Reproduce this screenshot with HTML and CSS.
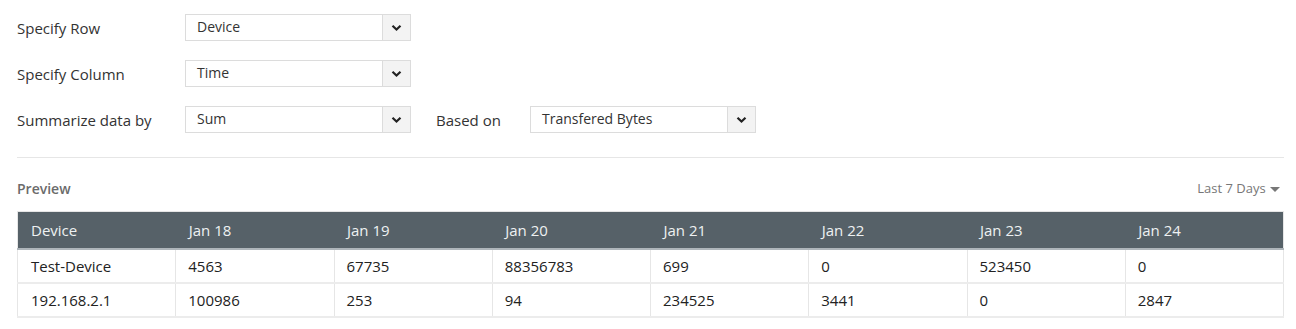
FILE: index.html
```html
<!DOCTYPE html>
<html lang="en">
  <head>
    <meta charset="utf-8">
    <title>Report Builder</title>
    <link rel="stylesheet" href="styles.css">
  </head>
  <body>
    <div class="page">

      <!-- report options -->
      <div class="options">
        <div class="optRow">
          <span class="optLabel">Specify Row</span>
          <div class="dropBox">
            <span class="dropText">Device</span>
            <span class="dropArrow"><svg width="11" height="8" viewBox="0 0 11 8"><path d="M1.5 1.8 L5.5 5.6 L9.5 1.8" fill="none" stroke="#222" stroke-width="2.2"/></svg></span>
          </div>
        </div>
        <div class="optRow">
          <span class="optLabel">Specify Column</span>
          <div class="dropBox">
            <span class="dropText">Time</span>
            <span class="dropArrow"><svg width="11" height="8" viewBox="0 0 11 8"><path d="M1.5 1.8 L5.5 5.6 L9.5 1.8" fill="none" stroke="#222" stroke-width="2.2"/></svg></span>
          </div>
        </div>
        <div class="optRow">
          <span class="optLabel">Summarize data by</span>
          <div class="dropBox">
            <span class="dropText">Sum</span>
            <span class="dropArrow"><svg width="11" height="8" viewBox="0 0 11 8"><path d="M1.5 1.8 L5.5 5.6 L9.5 1.8" fill="none" stroke="#222" stroke-width="2.2"/></svg></span>
          </div>
          <span class="optLabel small">Based on</span>
          <div class="dropBox">
            <span class="dropText">Transfered Bytes</span>
            <span class="dropArrow"><svg width="11" height="8" viewBox="0 0 11 8"><path d="M1.5 1.8 L5.5 5.6 L9.5 1.8" fill="none" stroke="#222" stroke-width="2.2"/></svg></span>
          </div>
        </div>
      </div>

      <hr class="divider">

      <!-- preview table -->
      <div class="previewHead">
        <span class="previewTitle">Preview</span>
        <span class="range">Last 7 Days <span class="caret"></span></span>
      </div>

      <table class="preview">
        <thead>
          <tr>
            <th>Device</th><th>Jan 18</th><th>Jan 19</th><th>Jan 20</th><th>Jan 21</th><th>Jan 22</th><th>Jan 23</th><th>Jan 24</th>
          </tr>
        </thead>
        <tbody>
          <tr>
            <td>Test-Device</td><td>4563</td><td>67735</td><td>88356783</td><td>699</td><td>0</td><td>523450</td><td>0</td>
          </tr>
          <tr>
            <td>192.168.2.1</td><td>100986</td><td>253</td><td>94</td><td>234525</td><td>3441</td><td>0</td><td>2847</td>
          </tr>
        </tbody>
      </table>

    </div>
  </body>
</html>
```

FILE: styles.css
```css
body {
  margin: 0;
  background-color: #ffffff;
  font-family: "Open Sans", "Liberation Sans", sans-serif;
  color: #333333;
}

.page {
  padding: 14px 12px 0 17px;
}

.options {
  display: flex;
  flex-direction: column;
  gap: 19px;
}

.optRow {
  display: flex;
  align-items: center;
  height: 27px;
}

.optLabel {
  width: 168px;
  font-size: 15px;
  color: #333333;
}

.optLabel.small {
  width: 94px;
  margin-left: 25px;
}

.dropBox {
  display: flex;
  width: 224px;
  height: 25px;
  border: 1px solid #dcdcdc;
  background-color: #ffffff;
}

.dropText {
  flex: 1;
  padding-left: 11px;
  font-size: 14px;
  line-height: 23px;
  color: #333333;
}

.dropArrow {
  display: flex;
  align-items: center;
  justify-content: center;
  width: 27px;
  border-left: 1px solid #dcdcdc;
  background-color: #f3f3f3;
}

.divider {
  margin: 24px 0 0 0;
  border: none;
  border-top: 1px solid #e6e6e6;
}

.previewHead {
  display: flex;
  justify-content: space-between;
  align-items: center;
  height: 22px;
  margin-top: 19px;
  margin-bottom: 12px;
}

.previewTitle {
  font-size: 14px;
  font-weight: 600;
  color: #6b6b6b;
}

.range {
  font-size: 13px;
  color: #777777;
  padding-right: 4px;
}

.caret {
  display: inline-block;
  width: 0;
  height: 0;
  margin-left: 1px;
  border-left: 5px solid transparent;
  border-right: 5px solid transparent;
  border-top: 5px solid #777777;
  vertical-align: middle;
}

.preview {
  width: 100%;
  border-collapse: collapse;
  table-layout: fixed;
  font-size: 15px;
  border: 1px solid #e6e6e6;
}

.preview th {
  height: 36px;
  padding: 0 13px;
  text-align: left;
  font-weight: normal;
  color: #eef1f2;
  background-color: #566168;
  border-bottom: 2px solid #aeb5ba;
}

.preview td {
  height: 32px;
  padding: 0 12px;
  border-bottom: 2px solid #ececec;
  border-left: 1px solid #e6e6e6;
  color: #222222;
}

.preview td:first-child {
  padding-left: 13px;
}
```
